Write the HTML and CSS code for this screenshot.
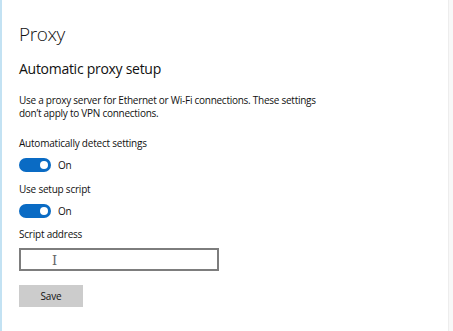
FILE: index.html
```html
<!DOCTYPE html>
<html>
<head>
<meta charset="utf-8">
<link rel="stylesheet" href="styles.css">
</head>
<body>
<div class="window">
  <div class="edge"></div>
  <main class="content">
    <h1 class="title">Proxy</h1>
    <h2 class="subtitle">Automatic proxy setup</h2>
    <p class="desc">Use a proxy server for Ethernet or Wi-Fi connections. These settings<br>don’t apply to VPN connections.</p>
    <div class="setting">
      <div class="label">Automatically detect settings</div>
      <div class="toggle-row"><span class="toggle"><span class="knob"></span></span><span class="state">On</span></div>
    </div>
    <div class="setting">
      <div class="label">Use setup script</div>
      <div class="toggle-row"><span class="toggle"><span class="knob"></span></span><span class="state">On</span></div>
    </div>
    <div class="setting address">
      <div class="label">Script address</div>
      <div class="input"><span class="ibeam">I</span></div>
    </div>
    <button class="save">Save</button>
  </main>
  <div class="rightedge"></div>
</div>
</body>
</html>
```
FILE: styles.css
```css
html, body {
  margin: 0;
  padding: 0;
  background: #ffffff;
}
body {
  font-family: "Open Sans", "Noto Sans", sans-serif;
  color: #111;
}
.window {
  display: flex;
  width: 453px;
  height: 331px;
  overflow: hidden;
}
.edge {
  width: 2px;
  flex: none;
  background: #c3e2f3;
}
.content {
  flex: 1;
  padding: 21px 0 0 17px;
}
.rightedge {
  width: 4px;
  flex: none;
  border-left: 1px solid #ededed;
  background: #f8f8f8;
}
.title {
  margin: 0;
  font-size: 19px;
  font-weight: 300;
  line-height: 26px;
  letter-spacing: -0.4px;
  color: #111;
}
.subtitle {
  margin: 12px 0 0;
  font-size: 14px;
  font-weight: 400;
  line-height: 20px;
  letter-spacing: -0.28px;
  color: #111;
}
.desc {
  margin: 15px 0 0;
  font-size: 10px;
  line-height: 13px;
  letter-spacing: -0.26px;
}
.setting {
  margin-top: 17px;
}
.setting + .setting {
  margin-top: 11px;
}
.setting.address {
  margin-top: 10px;
}
.label {
  font-size: 10px;
  line-height: 13px;
  letter-spacing: -0.22px;
}
.toggle-row {
  display: flex;
  align-items: center;
  margin-top: 8px;
  height: 14px;
}
.toggle {
  width: 32px;
  height: 14px;
  border-radius: 7px;
  background: #0a6bc4;
  display: flex;
  align-items: center;
  justify-content: flex-end;
  padding-right: 3px;
  box-sizing: border-box;
}
.knob {
  width: 8px;
  height: 8px;
  border-radius: 50%;
  background: #fff;
}
.state {
  margin-left: 7px;
  font-size: 10px;
  letter-spacing: -0.2px;
}
.input {
  margin-top: 7px;
  width: 200px;
  height: 23px;
  box-sizing: border-box;
  border: 2px solid #7d7d7d;
  position: relative;
}
.ibeam {
  position: absolute;
  left: 31px;
  top: 4px;
  font-family: "DejaVu Serif", serif;
  font-size: 13px;
  line-height: 14px;
  color: #666;
}
.save {
  display: block;
  margin-top: 14px;
  width: 64px;
  height: 22px;
  border: none;
  background: #cccccc;
  font-family: inherit;
  font-size: 10px;
  letter-spacing: -0.2px;
  color: #111;
  padding: 0;
}
```
